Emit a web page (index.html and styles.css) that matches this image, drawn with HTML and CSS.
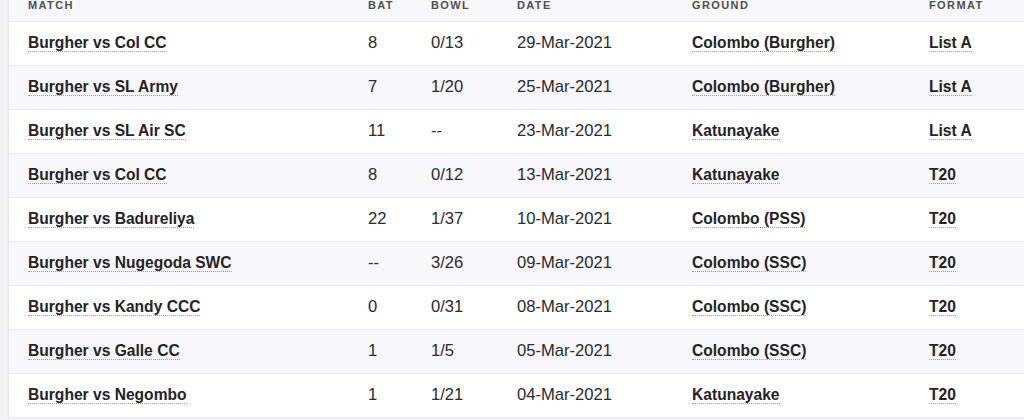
FILE: index.html
```html
<!DOCTYPE html>
<html>
<head>
<meta charset="utf-8">
<link rel="stylesheet" href="styles.css">
</head>
<body>
<div class="page">
  <div class="card">
    <table class="matches">
      <colgroup>
        <col class="c-match"><col class="c-bat"><col class="c-bowl"><col class="c-date"><col class="c-ground"><col class="c-format">
      </colgroup>
      <thead>
        <tr><th>Match</th><th>Bat</th><th>Bowl</th><th>Date</th><th>Ground</th><th>Format</th></tr>
      </thead>
      <tbody>
        <tr><td><a class="lnk">Burgher vs Col CC</a></td><td>8</td><td>0/13</td><td>29-Mar-2021</td><td><a class="lnk">Colombo (Burgher)</a></td><td><a class="lnk">List A</a></td></tr>
        <tr><td><a class="lnk">Burgher vs SL Army</a></td><td>7</td><td>1/20</td><td>25-Mar-2021</td><td><a class="lnk">Colombo (Burgher)</a></td><td><a class="lnk">List A</a></td></tr>
        <tr><td><a class="lnk">Burgher vs SL Air SC</a></td><td>11</td><td>--</td><td>23-Mar-2021</td><td><a class="lnk">Katunayake</a></td><td><a class="lnk">List A</a></td></tr>
        <tr><td><a class="lnk">Burgher vs Col CC</a></td><td>8</td><td>0/12</td><td>13-Mar-2021</td><td><a class="lnk">Katunayake</a></td><td><a class="lnk">T20</a></td></tr>
        <tr><td><a class="lnk">Burgher vs Badureliya</a></td><td>22</td><td>1/37</td><td>10-Mar-2021</td><td><a class="lnk">Colombo (PSS)</a></td><td><a class="lnk">T20</a></td></tr>
        <tr><td><a class="lnk">Burgher vs Nugegoda SWC</a></td><td>--</td><td>3/26</td><td>09-Mar-2021</td><td><a class="lnk">Colombo (SSC)</a></td><td><a class="lnk">T20</a></td></tr>
        <tr><td><a class="lnk">Burgher vs Kandy CCC</a></td><td>0</td><td>0/31</td><td>08-Mar-2021</td><td><a class="lnk">Colombo (SSC)</a></td><td><a class="lnk">T20</a></td></tr>
        <tr><td><a class="lnk">Burgher vs Galle CC</a></td><td>1</td><td>1/5</td><td>05-Mar-2021</td><td><a class="lnk">Colombo (SSC)</a></td><td><a class="lnk">T20</a></td></tr>
        <tr><td><a class="lnk">Burgher vs Negombo</a></td><td>1</td><td>1/21</td><td>04-Mar-2021</td><td><a class="lnk">Katunayake</a></td><td><a class="lnk">T20</a></td></tr>
      </tbody>
    </table>
  </div>
</div>
</body>
</html>
```
FILE: styles.css
```css
html, body {
  margin: 0;
  padding: 0;
  background: #f3f3f5;
  overflow: hidden;
}
.page {
  padding-left: 9px;
  margin-top: -21px;
}
.card {
  background: #fff;
  box-shadow: 0 1px 3px rgba(0,0,0,0.12);
}
.matches {
  width: 1015px;
  border-collapse: collapse;
  table-layout: fixed;
  font-family: "Liberation Sans", Arial, sans-serif;
  color: #2b2c2d;
}
.c-match { width: 340px; }
.c-bat { width: 63px; }
.c-bowl { width: 86px; }
.c-date { width: 175px; }
.c-ground { width: 237px; }
.c-format { width: auto; }
.matches th {
  height: 42px;
  background: #f8f8fa;
  text-align: left;
  font-size: 11px;
  font-weight: 700;
  letter-spacing: 1.4px;
  text-transform: uppercase;
  color: #4e4f51;
  padding: 0 0 10px 19px;
  border-bottom: 1px solid #ececef;
  vertical-align: bottom;
  box-sizing: border-box;
}
.matches td {
  height: 44px;
  padding: 0 0 0 19px;
  font-size: 16.6px;
  color: #2b2c2d;
  border-bottom: 1px solid #ececef;
  box-sizing: border-box;
  white-space: nowrap;
}
.matches tbody tr:nth-child(even) td { background: #f8f8fa; }
.lnk {
  font-weight: 700;
  font-size: 15.6px;
  color: #232425;
  text-decoration: none;
  border-bottom: 1px dotted #9a9a9a;
}
```
